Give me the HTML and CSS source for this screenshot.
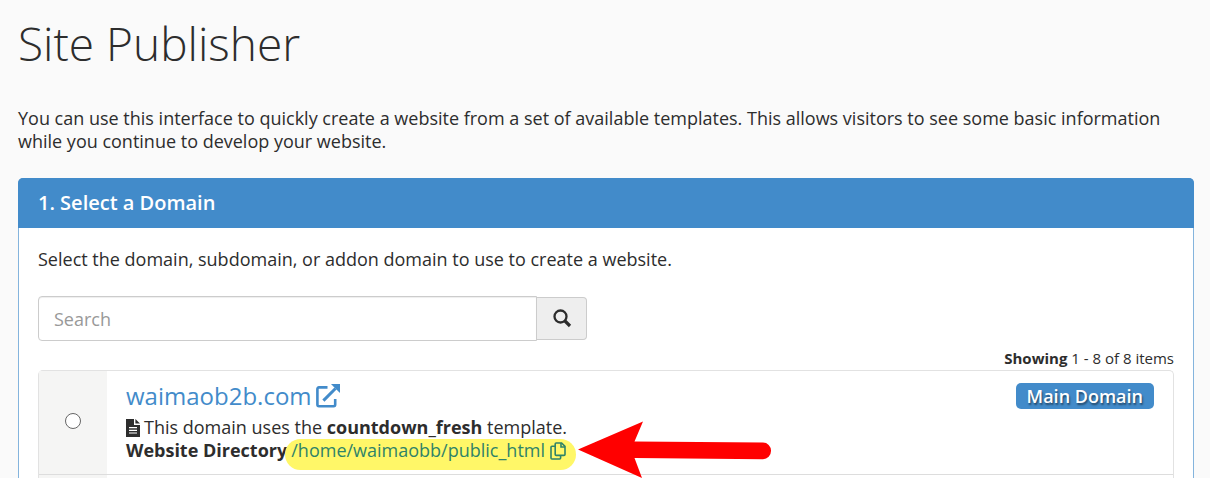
FILE: index.html
```html
<!DOCTYPE html>
<html lang="en">
<head>
    <meta charset="UTF-8">
    <meta name="viewport" content="width=device-width, initial-scale=1.0">
    <title>Site Publisher</title>
    <link rel="stylesheet" href="styles.css">
</head>
<body>
    <h1>Site Publisher</h1>
    <p class="intro">You can use this interface to quickly create a website from a set of available templates. This allows visitors to see some basic information while you continue to develop your website.</p>

    <section class="panel">
        <h2 class="panel-heading">1. Select a Domain</h2>
        <div class="panel-body">
            <p>Select the domain, subdomain, or addon domain to use to create a website.</p>

            <form class="search">
                <input type="text" class="search-input" placeholder="Search" aria-label="Search">
                <button type="button" class="search-btn" aria-label="Search">
                    <svg width="20" height="20" viewBox="0 0 20 20">
                        <circle cx="8.5" cy="7.5" r="6" fill="none" stroke="#2d2d2d" stroke-width="2.3"/>
                        <path d="M13 12L18 17" stroke="#2d2d2d" stroke-width="3.2"/>
                    </svg>
                </button>
            </form>

            <div class="showing"><b>Showing</b> 1 - 8 of 8 items</div>

            <!-- Domain list -->
            <div class="domain-list">
                <div class="domain-row">
                    <div class="domain-select">
                        <input type="radio" id="domain-1" name="domain" aria-label="waimaob2b.com">
                    </div>
                    <div class="domain-info">
                        <a class="domain-name" href="#">waimaob2b.com
                            <svg width="24" height="24" viewBox="0 0 24 24">
                                <path d="M11.5 3.4H3Q1.4 3.4 1.4 5V20.6Q1.4 22.2 3 22.2H17.6Q19.2 22.2 19.2 20.6V15" fill="none" stroke="#428bca" stroke-width="2.6"/>
                                <path d="M7.4 16.6L19.5 4.5" stroke="#428bca" stroke-width="3"/>
                                <path d="M15 0H24V9L20.9 6.1 17.9 3.1Z" fill="#428bca"/>
                            </svg>
                        </a>
                        <div class="domain-line">
                            <svg width="14" height="18" viewBox="0 0 14 18">
                                <path d="M0 0H8V6H14V18H0Z" fill="#2d2d2d"/>
                                <path d="M9.4 0L14 4.6H9.4Z" fill="#2d2d2d"/>
                                <path d="M3 8.6H11M3 11.3H11M3 14H11" stroke="#fff" stroke-width="1.2"/>
                            </svg>
                            <span>This domain uses the <b>countdown_fresh</b> template.</span>
                        </div>
                        <div class="domain-line">
                            <b>Website Directory</b>
                            <a class="directory" href="#">/home/waimaobb/public_html
                                <svg width="16" height="18" viewBox="0 0 16 18" fill="none" stroke="#2f8368" stroke-width="1.6">
                                    <path d="M6.2 1H11.6L15 4.4V12.4Q15 13.4 14 13.4H6.2Q5.2 13.4 5.2 12.4V2Q5.2 1 6.2 1Z"/>
                                    <path d="M11 1V5H15"/>
                                    <path d="M5.2 4.2H2Q1 4.2 1 5.2V16Q1 17 2 17H9.6Q10.6 17 10.6 16V13.4"/>
                                </svg>
                            </a>
                            <svg class="arrow" width="194" height="60" viewBox="0 0 194 60">
                                <path d="M0 28.5L65 0.5 56.5 20.5 185 21.5A8 8.3 0 0 1 185 38.2L56.5 37 64 57Z" fill="#ff0000"/>
                            </svg>
                        </div>
                    </div>
                    <span class="badge">Main Domain</span>
                </div>
                <div class="domain-row">
                    <div class="domain-select"></div>
                </div>
            </div>
        </div>
    </section>
</body>
</html>
```

FILE: styles.css
```css
* {
    box-sizing: border-box;
    margin: 0;
    padding: 0;
}

body {
    font-family: "Open Sans", sans-serif;
    font-size: 18px;
    line-height: 23px;
    color: #2d2d2d;
    background-color: #fafafa;
    height: 100vh;
    padding: 15px 16px 0 18px;
    display: flex;
    flex-direction: column;
}

a {
    color: #428bca;
    text-decoration: none;
}

h1 {
    font-size: 46px;
    font-weight: 300;
    line-height: 56px;
    margin-bottom: 36px;
}

.intro {
    margin-bottom: 25px;
}

/* Panel */
.panel {
    flex: 1;
    display: flex;
    flex-direction: column;
    background-color: #fff;
    border: 1px solid #84b4dd;
    border-bottom: none;
    border-radius: 5px 5px 0 0;
}

.panel-heading {
    background-color: #428bca;
    color: #fff;
    font-size: 20px;
    font-weight: 600;
    line-height: 24px;
    padding: 13px 20px;
    margin: -1px -1px 0;
    border-radius: 5px 5px 0 0;
}

.panel-body {
    flex: 1;
    display: flex;
    flex-direction: column;
    padding: 20px 19px 0;
}

/* Search box */
.search {
    display: flex;
    align-items: center;
    width: calc(50% - 19px);
    margin-top: 25px;
}

.search-input {
    flex: 1;
    min-width: 0;
    height: 45px;
    padding: 0 15px;
    font: inherit;
    color: #2d2d2d;
    border: 1px solid #ccc;
    border-radius: 4px 0 0 4px;
    box-shadow: inset 0 1px 1px rgba(0, 0, 0, 0.07);
}

.search-input::placeholder {
    color: #999;
}

.search-btn {
    display: flex;
    align-items: center;
    justify-content: center;
    width: 50px;
    height: 43px;
    background-color: #eee;
    border: 1px solid #ccc;
    border-left: none;
    border-radius: 0 4px 4px 0;
}

.showing {
    font-size: 15px;
    text-align: right;
    margin-top: 6px;
}

/* Domain rows */
.domain-list {
    flex: 1;
    display: flex;
    flex-direction: column;
    border: 1px solid #e2e2e2;
    border-bottom: none;
    border-radius: 5px 5px 0 0;
}

.domain-row {
    display: flex;
    align-items: flex-start;
    border-bottom: 1px solid #ddd;
}

.domain-row:last-child {
    flex: 1;
    border-bottom: none;
}

.domain-select {
    align-self: stretch;
    display: flex;
    align-items: center;
    justify-content: center;
    width: 68px;
    padding-bottom: 4px;
    background-color: #f5f5f4;
}

.domain-select input {
    appearance: none;
    width: 16px;
    height: 16px;
    border: 1px solid #666;
    border-radius: 50%;
    background-color: #fff;
}

.domain-info {
    flex: 1;
    padding: 11px 19px 12px;
}

.domain-name {
    display: flex;
    align-items: center;
    gap: 4px;
    font-size: 24px;
    font-weight: 500;
    line-height: 28px;
    margin-bottom: 6px;
}

.domain-line {
    display: flex;
    align-items: center;
    gap: 4px;
}

.domain-line svg {
    flex: none;
}

.directory {
    position: relative;
    z-index: 0;
    display: flex;
    align-items: center;
    gap: 5px;
    color: #2f8368;
}

/* Highlighter mark behind the path */
.directory::before {
    content: "";
    position: absolute;
    z-index: -1;
    top: 0;
    right: -10px;
    bottom: -8px;
    left: -6px;
    background-color: #fff768;
    border-radius: 16px;
}

.arrow {
    margin: -20px 8px;
}

.badge {
    background-color: #428bca;
    color: #fff;
    font-weight: 600;
    line-height: 24px;
    text-shadow: 1px 2px 2px rgba(0, 0, 0, 0.5);
    padding: 1px 11px;
    margin: 12px 19px 0 0;
    border-radius: 5px;
}
```
